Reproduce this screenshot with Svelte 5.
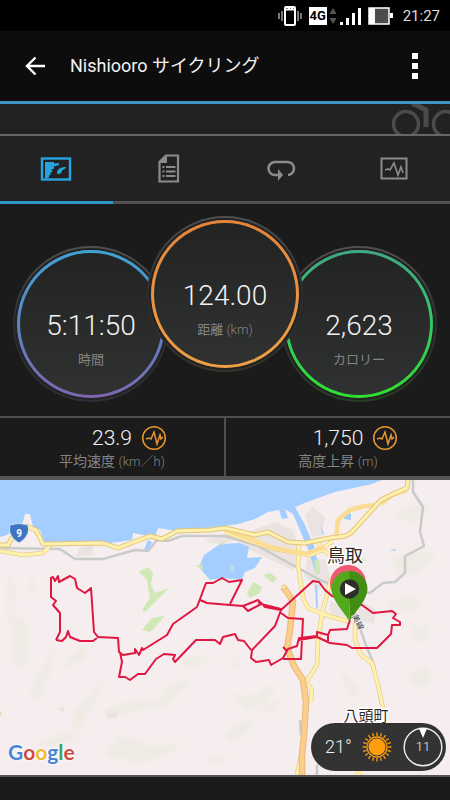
<script>
  const tabs = ['overview', 'details', 'laps', 'charts'];
  let active = $state('overview');

  const gauges = [
    { kind: 'time', value: '5:11:50', label: '時間', unit: '' },
    { kind: 'distance', value: '124.00', label: '距離', unit: '(km)' },
    { kind: 'calories', value: '2,623', label: 'カロリー', unit: '' }
  ];
  const stats = [
    { value: '23.9', label: '平均速度', unit: '(km／h)' },
    { value: '1,750', label: '高度上昇', unit: '(m)' }
  ];
  const logo = [
    ['G', '#4a83d8'], ['o', '#cf4a40'], ['o', '#eebb2e'],
    ['g', '#4a83d8'], ['l', '#3fa35b'], ['e', '#cf4a40']
  ];
  const rays = Array.from({ length: 20 }, (_, i) => i * 18);

  const north = 'M0 545 8 545 13 536 26 526 36 530 43 544 103 543 118 548 150 536 162 539 177 531 210 530 225 528 255 535 268 532 288 542 305 543 330 538 345 536 351 533 381 500 395 493 407 488 408 480';
  const south = 'M0 551 23 555 43 553 51 545M225 532 262 545 275 549 310 555 320 551 333 541M317 540 323 550 330 555M299 543 298 565 303 598 308 608 322 614 350 622M331 578 322 614 318 640 317 665 306 682 312 690 311 702M355 622 355 640 361 655 372 663 378 685 383 708M297 775 301 755M355 775 362 772';
  const thick = 'M336 540 338 520 350 510 365 506 378 505M381 504 392 495 407 490M225 530 248 538 270 547 305 554 325 547';
  const orange = 'M283 587 287 592 293 601 290 630 287 648 294 666 303 680 306 702 304 735 302 755 302 775';
  const rail = 'M0 548 60 549 75 559 103 559 135 550 148 551 157 540 168 541 182 536 225 536 258 546 320 580 345 590 370 593 383 583 395 582 405 573 405 556 413 552 424 546 420 532 423 507 413 492 413 480M354 610 364 640 374 665 381 705M300 720 301 735M317 765 317 775';
  const route = 'M56 640 60 632 60 613 53 605 56 601 51 597 51 578 53 577 55 581 58 576 59 582 70 576 75 579 77 588 85 593 91 588 94 632 98 637 118 638 119 652 123 655 135 653 135 649 139 655 142 648 143 650 167 635 173 624 197 607 200 599 206 583 213 583 222 578 229 582 242 580 230 604M200 600 207 603 230 605 243 606 258 600 265 607 281 610M243 606 248 611 261 604 281 609M258 602 270 608M281 610 313 581 319 582 325 590 332 596 362 605 373 613 392 611 396 614 393 618 400 622 400 625 392 625 391 634 377 648 352 648 347 645 330 643 317 637 299 640M281 610 275 626 252 650 251 658 256 662 269 660 271 665 283 658 288 649 297 646 299 638 317 636 317 632 328 635 330 630 347 629 350 620M328 635 328 643M281 613 288 618 303 619 301 659 283 659M283 647 287 651M251 650 244 641 238 640 235 634 223 637 220 644 215 640 196 640 175 662 173 659 175 655 164 654 156 659 145 674 138 674 130 680 125 677 119 677 122 662 120 652M56 640 62 641 66 637 68 631 70 637 80 641 93 641 97 638';
</script>

<div class="app">
  <div class="status">
    <svg width="24" height="22" viewBox="0 0 24 22" fill="none" stroke="#fff">
      <rect x="7" y="2" width="10" height="18" rx="1" stroke-width="2" />
      <path d="M7 4.500h10M10 2.500h2m1 0h2" stroke-width="2" />
      <path d="M1 8v6M4 6v10M20 6v10M23 8v6" stroke="#bbb" stroke-width="1.300" />
    </svg>
    <div class="network">
      <span class="badge">4G</span>
      <svg width="8" height="18" viewBox="0 0 8 18" fill="#555"><path d="M4 1 7.500 7h-7zM4 17 .5 11h7z" /></svg>
    </div>
    <svg width="21" height="18" viewBox="0 0 21 18" fill="#fff"><path d="M0 15h3v3H0zM6 11h3v7H6zM12 6h3v12h-3zM18 1h3v17h-3z" /></svg>
    <svg width="25" height="18" viewBox="0 0 25 18">
      <rect x="1" y="1" width="20" height="16" fill="#4c4c4c" stroke="#fff" stroke-width="1.500" />
      <path d="M1 1h6v16H1zM22 6h3v5h-3z" fill="#fff" />
    </svg>
    <time>21:27</time>
  </div>

  <header>
    <button class="back" aria-label="戻る">
      <svg width="22" height="20" viewBox="0 0 22 20" fill="none" stroke="#fff" stroke-width="2.400"><path d="M21 10H3M11.500 1.500 3 10l8.500 8.500" /></svg>
    </button>
    <h1>Nishiooro サイクリング</h1>
    <button class="more" aria-label="メニュー">
      <svg width="6" height="26" viewBox="0 0 6 26" fill="#fff"><path d="M0 0h6v6H0zM0 10h6v6H0zM0 20h6v6H0z" /></svg>
    </button>
  </header>

  <div class="strip">
    <svg width="60" height="30" viewBox="0 0 60 30" fill="none" stroke="#4b4b4b">
      <circle cx="16" cy="20" r="12.500" stroke-width="3.500" />
      <circle cx="56" cy="20" r="12.500" stroke-width="3.500" />
      <path d="M22-1 36 6v17" stroke-width="5" stroke-linejoin="round" />
    </svg>
  </div>

  <nav>
    {#each tabs as tab}
      <button class="tab" class:active={active === tab} aria-label={tab} onclick={() => (active = tab)}>
        {#if tab === 'overview'}
          <svg width="32" height="24" viewBox="0 0 32 24">
            <rect x="2" y="1.500" width="28" height="21" fill="none" stroke="currentColor" stroke-width="2.400" />
            <path d="M5 5h9v1.500l5-.5v2l-5 1.500v2l-3 1.500 2 1.500-3 1.500 1 1.500-2 1v2l-4 1zM17 16c0-4 4-6 9-6 0 2-3 2-4 4s-1 3-4 3z" fill="currentColor" />
          </svg>
        {:else if tab === 'details'}
          <svg width="22" height="30" viewBox="0 0 22 30">
            <path d="M8 1.500h12v26H1.500V8z" fill="none" stroke="currentColor" stroke-width="2.200" />
            <path d="M9 1v8H1V7.500L7.500 1z" fill="currentColor" />
            <path d="M4.500 13h2M8 13h9.500M4.500 17.500h2M8 17.500h9.500M4.500 22h2M8 22h9.500" stroke="currentColor" stroke-width="2" />
          </svg>
        {:else if tab === 'laps'}
          <svg width="30" height="24" viewBox="0 0 30 24">
            <path d="M12 18H9A6.500 6.500 0 0 1 9 5h12a6.500 6.500 0 0 1 1 13" fill="none" stroke="currentColor" stroke-width="2.600" />
            <path d="m12 12 5 6-5 6z" fill="currentColor" />
          </svg>
        {:else}
          <svg width="28" height="24" viewBox="0 0 28 24" fill="none" stroke="currentColor">
            <rect x="1.500" y="1.500" width="25" height="20" stroke-width="2" />
            <path d="m5 13 3-1 2 1 4-7 4 12 3-8 2 6" stroke-width="1.700" />
          </svg>
        {/if}
      </button>
    {/each}
  </nav>

  <main>
    <section class="gauges">
      {#each gauges as g}
        <div class="gauge {g.kind}">
          <div class="ring">
            <div class="face">
              <span class="value">{g.value}</span>
              <span class="label">{g.label} {#if g.unit}<span class="unit">{g.unit}</span>{/if}</span>
            </div>
          </div>
        </div>
      {/each}
    </section>

    <section class="stats">
      {#each stats as s}
        <div class="stat">
          <div class="figure">
            <span class="number">{s.value}</span>
            <svg width="26" height="26" viewBox="0 0 26 26" fill="none" stroke="#e8962e">
              <circle cx="13" cy="13" r="11.300" stroke-width="1.500" />
              <path d="m5 14 3-1 2 1 3-7 3 12 3-9 1 4 2-2" stroke-width="1.500" />
            </svg>
          </div>
          <span class="label">{s.label} <span class="unit">{s.unit}</span></span>
        </div>
      {/each}
    </section>

    <section class="map">
      <svg class="chart" viewBox="0 480 450 295" preserveAspectRatio="xMidYMid slice">
        <defs>
          <filter id="soft"><feGaussianBlur stdDeviation="2" /></filter>
        </defs>
        <rect y="480" width="450" height="295" fill="#f6edee" />
        <g fill="#eeebe4" filter="url(#soft)">
          <path d="m8 575 8 14-5 30 6 14-9-8zM30 568l5 22-4 8zM14 610l16 18-6 40-12-8zM35 680l14-22 3-10 1 18-9 20-8 16-5-6zM70 655l14-9 4 10-10 6-18 6zM75 710l14-12 12-18-2 14-13 22-8 16-6-7zM98 712l24-8 36-4 10-14 22-9-6 12-18 17-30 4-20 8zM120 735l34 12 26-4-12 12-28 8-34-8zM30 745l35-12 14 5-22 8zM180 660l22-5 8 5-20 9zM230 695l22 2 24-14-8 18-20 10zM225 735l22-16 8 6-20 18zM230 655l12 6-6 8zM260 710l18-10-2 14zM205 760l22-5-10 10zM390 560l30-12 15 8-17 17-20 3zM395 515l24-13 10 9-16 14zM385 605l24-9 16 8-19 9zM412 630l20-7-5 14-14 7zM340 670l20 20-8 10zM407 675l18-9 8 14-16 9z" />
        </g>
        <g fill="#ebe3e2">
          <path d="m80 548 14-5-2 12-17 2zM240 535l35-13 18 8 8 22-8 18-22-10-28-14zM305 515l8-8 12 10-3 18-10 2zM308 556l18 4 5 22-12 8-15-14zM330 600l16 8 4 10-20-4zM358 598l18 12-2 14-16-4zM58 708l8-1-4 6zM107 710l12 2-3 6-9 1zM205 540l20-6 18 6-30 4z" />
        </g>
        <path fill="#a3ceff" d="M0 480h382l-10 4-37 8-28 10-12 5 9 16 10 23 6 27-4 1-8-25-15-35-8-5 3 9-6 1-3-9-11 2-13 7-17 5-13 2-48 5-19-3-3 9-22-4-1 7-22 3-65 2-5-15-7-3-3-13h-5l-3 11-15 10-7 2z" />
        <path fill="#a3ceff" d="m204 555 16-11 20-1 9 4-2 11 15-1-7 11-10 4-3 8-19-2-13 2-11-13zM148 540l4 2-3 8h-5zM344 515l7-2v7l-7-1zM320 526l4 7-1 3zM315 585h2l1 24-2-2zM389 550l6-1 1 2z" />
        <g fill="#cfe8b6">
          <path d="m139 572 9-5 5 6-2 12 4 8 14-5-24 24-3-2 8-12-3-18zM142 630l10-12 12-2-5 7-9 9zM247 593l6-11 9 5-2 6-10 5zM263 575l7-2 7 5-4 5zM314 560h5l1 12-4 3zM196 566l6-2 1 6zM217 544l8-2-2 3zM362 558l4 3-5 2zM231 566l2-1 1 7-3-2zM0 710l2 4-2 2z" />
        </g>
        <g fill="none" stroke-linejoin="round">
          <path d={rail} stroke="#c9cbca" stroke-width="2.500" />
          <path d={south} stroke="#e6d08a" stroke-width="4.500" />
          <path d={south} stroke="#fff1b0" stroke-width="3" />
          <path d={thick} stroke="#fbdc93" stroke-width="4.500" />
          <path d={north} stroke="#dfc67c" stroke-width="5" />
          <path d={north} stroke="#fff0ae" stroke-width="3" />
          <path d={orange} stroke="#e5b977" stroke-width="6.500" />
          <path d={orange} stroke="#fdce8b" stroke-width="4.500" />
          <circle cx="284" cy="587" r="2" fill="#fff0ae" stroke="#dfc67c" />
          <path d={route} stroke="#df1742" stroke-width="2" />
        </g>
        <path fill="#3d75c4" stroke="#fff" stroke-width=".6" d="M10 525q9-3 18 0 1 4 0 8-2 6-9 10-7-4-9-10-1-4 0-8z" />
        <text class="shield" x="19" y="537">9</text>
        <circle cx="348" cy="583" r="18" fill="#ed5b73" />
        <path d="M349.500 571a18 18 0 0 0-18 18c0 10 12 23 18 32z" fill="#54a91b" />
        <path d="M349.500 571a18 18 0 0 1 18 18c0 10-12 23-18 32z" fill="#418e12" />
        <circle cx="349.500" cy="589" r="9.700" fill="#2c2e2b" />
        <path d="m345 583 11 6-11 6z" fill="#fff" />
        <text class="line-name" transform="translate(352 616) rotate(65)">美線</text>
        <text class="place city" x="345" y="562">鳥取</text>
        <text class="place town" x="366" y="721">八頭町</text>
      </svg>
      <span class="google">{#each logo as [ch, color]}<span style:color>{ch}</span>{/each}</span>
      <div class="weather">
        <span class="temp">21°</span>
        <svg width="30" height="30" viewBox="-15 -15 30 30">
          {#each rays as a}
            <path d="M0-11V-14.500" transform="rotate({a})" stroke="#f79a12" stroke-width="1.400" />
          {/each}
          <circle r="10" fill="none" stroke="#f79a12" stroke-width="1.300" />
          <circle r="8.500" fill="#ff9d10" />
        </svg>
        <div class="wind">
          <svg width="40" height="40" viewBox="0 0 40 40">
            <circle cx="20" cy="20" r="18.800" fill="none" stroke="#eee" stroke-width="1.400" />
            <path d="M16 1.500h8L20 11z" fill="#fff" />
          </svg>
          <span>11</span>
        </div>
      </div>
    </section>
  </main>
</div>

<style>
  :global(body) {
    margin: 0;
    background: #1b1b1b;
  }
  .app {
    min-height: 100vh;
    background: #1b1b1b;
    color: #f2f2f2;
    font-family: Roboto, "Noto Sans CJK JP", sans-serif;
  }
  svg {
    display: block;
    flex: none;
  }
  button {
    border: 0;
    padding: 0;
    background: none;
    color: inherit;
    display: flex;
    align-items: center;
    justify-content: center;
  }
  .status {
    display: flex;
    align-items: center;
    justify-content: flex-end;
    gap: 7px;
    height: 31px;
    padding-right: 10px;
    background: #000;
  }
  .network {
    display: flex;
    align-items: center;
    gap: 2px;
    margin-right: -4px;
  }
  .badge {
    width: 18px;
    background: #fff;
    color: #000;
    font: 700 13px/18px Roboto, sans-serif;
    text-align: center;
  }
  time {
    margin-left: 3px;
    font-size: 15px;
    line-height: 18px;
    color: #ddd;
  }
  header {
    display: flex;
    align-items: center;
    height: 70px;
    background: #0d0d0d;
    border-bottom: 3px solid #3a93c4;
  }
  .back {
    width: 70px;
    height: 48px;
  }
  h1 {
    flex: 1;
    margin: 0;
    font-size: 18px;
    font-weight: 400;
    line-height: 24px;
  }
  .more {
    width: 70px;
    height: 48px;
  }
  .strip {
    display: flex;
    justify-content: flex-end;
    height: 30px;
    overflow: hidden;
    background: #222;
    border-bottom: 2px solid #666;
  }
  nav {
    display: flex;
    background: #222;
  }
  .tab {
    flex: 1;
    height: 68px;
    color: #8b8b8b;
    border-bottom: 3px solid #505050;
  }
  .tab.active {
    color: #25a4e0;
    border-color: #2f96cc;
  }
  .gauges {
    display: flex;
    justify-content: center;
    align-items: flex-end;
    padding: 12px 0 14px;
  }
  .gauge {
    box-sizing: border-box;
    width: 156px;
    height: 156px;
    padding: 4px;
    border-radius: 50%;
    background: linear-gradient(#505050, #2b2b2b 50%, #2e2f38);
  }
  .distance {
    z-index: 1;
    margin: 0 -22px 30px;
    background: linear-gradient(#505050, #2b2b2b 50%, #37332c);
  }
  .calories {
    background: linear-gradient(#505050, #2c302c 50%, #244024);
  }
  .ring {
    box-sizing: border-box;
    height: 148px;
    padding: 3px;
    border-radius: 50%;
    background: linear-gradient(#3fa3d2, #5c86c4 50%, #7d67b0);
    box-shadow: 0 0 0 2px #222;
  }
  .distance .ring {
    background: linear-gradient(#e5843b, #eda045);
  }
  .calories .ring {
    background: linear-gradient(#3fa884, #34c765 50%, #2ee030);
  }
  .face {
    display: flex;
    flex-direction: column;
    align-items: center;
    height: 142px;
    border-radius: 50%;
    background: linear-gradient(#222323, #303131);
  }
  .value {
    margin-top: 56px;
    font-size: 28px;
    font-weight: 300;
    line-height: 34px;
  }
  .label {
    font-size: 13px;
    line-height: 18px;
    color: #858585;
    white-space: nowrap;
  }
  .unit {
    font-size: 13px;
    font-weight: 300;
  }
  .gauge .label {
    margin-top: 8px;
  }
  .stats {
    display: flex;
    gap: 2px;
    padding-top: 2px;
    background: #505050;
    border-bottom: 4px solid #555;
  }
  .stat {
    flex: 1;
    display: flex;
    flex-direction: column;
    align-items: center;
    height: 52px;
    padding-top: 6px;
    background: #1b1b1b;
  }
  .figure {
    display: grid;
    grid-template-columns: 1fr auto 1fr;
    align-items: center;
    gap: 9px;
    align-self: stretch;
    height: 28px;
  }
  .number {
    grid-column: 2;
    font-size: 21px;
    font-weight: 300;
    line-height: 28px;
  }
  .stat .label {
    font-size: 14px;
  }
  .map {
    position: relative;
    border-bottom: 2px solid #555;
  }
  .chart {
    width: 100%;
    height: auto;
  }
  .place {
    fill: #33291f;
    stroke: #fff;
    stroke-width: 3px;
    stroke-linejoin: round;
    paint-order: stroke;
    text-anchor: middle;
  }
  .city {
    font-size: 18px;
  }
  .town {
    font-size: 15px;
  }
  .shield {
    fill: #fff;
    font-size: 10px;
    font-weight: 700;
    text-anchor: middle;
  }
  .line-name {
    fill: #333;
    stroke: #fff;
    stroke-width: 1px;
    paint-order: stroke;
    font-size: 8px;
  }
  .google {
    position: absolute;
    left: 8px;
    bottom: 10px;
    font: 700 21px/26px Lato, sans-serif;
    text-shadow: 0 0 2px #fff, 0 0 2px #fff, 0 0 3px #fff;
  }
  .weather {
    position: absolute;
    right: 4px;
    bottom: 4px;
    box-sizing: border-box;
    display: flex;
    align-items: center;
    justify-content: space-between;
    width: 135px;
    height: 48px;
    padding: 0 3px 0 14px;
    border-radius: 24px;
    background: #333;
  }
  .temp {
    font-size: 18px;
    font-weight: 300;
    line-height: 24px;
  }
  .wind {
    display: grid;
    place-items: center;
  }
  .wind > * {
    grid-area: 1 / 1;
  }
  .wind span {
    font-size: 13px;
    font-weight: 300;
    line-height: 16px;
  }
</style>
